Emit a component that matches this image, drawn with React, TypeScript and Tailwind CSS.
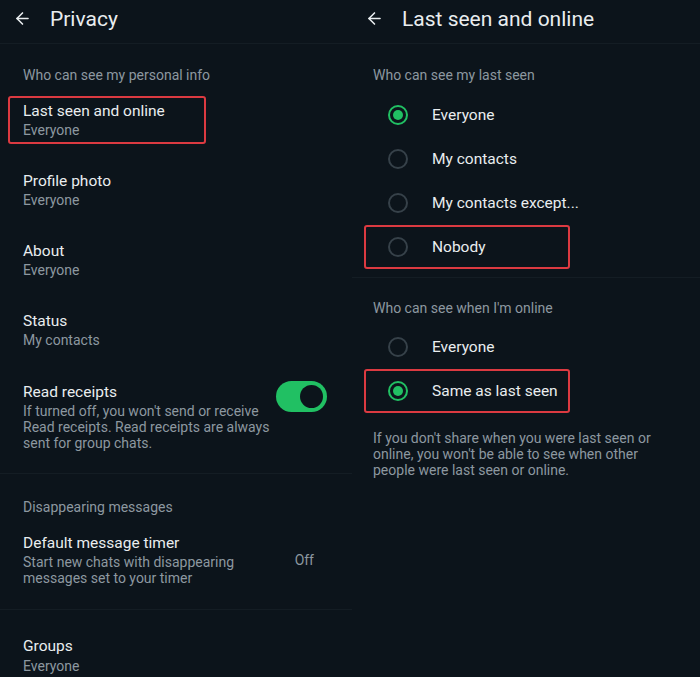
import { ArrowLeft } from 'lucide-react'
import type { ReactNode } from 'react'

const FONT = { fontFamily: 'Roboto, "Noto Sans", sans-serif' }

function Header({ title }: { title: string }) {
  return (
    <div className="h-[44px] flex items-center pb-[6px] pl-[13px] border-b border-[#141d24]">
      <ArrowLeft size={19} strokeWidth={2} className="text-[#e9edef] shrink-0" />
      <span className="ml-[18px] text-[21px] leading-[26px] text-[#e9edef] whitespace-nowrap">{title}</span>
    </div>
  )
}

// red outline drawn over the highlighted row
function Marked({ on, children, className = '' }: { on?: boolean; children: ReactNode; className?: string }) {
  return (
    <div className={`relative ${className}`}>
      {on && <span className="absolute inset-0 border-2 border-[#dc3a41] rounded-[3px] pointer-events-none" />}
      {children}
    </div>
  )
}

function Item({ title, sub, marked }: { title: string; sub: string; marked?: boolean }) {
  return (
    <Marked on={marked} className="mx-[8px] w-[198px] h-[48px] mb-[22px]">
      <div className="pl-[15px] pt-[5px]">
        <div className="text-[15.5px] leading-[20px] text-[#e9edef] whitespace-nowrap">{title}</div>
        <div className="text-[14px] leading-[18px] text-[#8d98a0]">{sub}</div>
      </div>
    </Marked>
  )
}

function Radio({ label, checked, marked }: { label: string; checked?: boolean; marked?: boolean }) {
  return (
    <Marked on={marked} className="ml-[12px] w-[206px] h-[44px]">
      <div className="h-full flex items-center pl-[24px]">
        {checked ? (
          <span className="shrink-0 w-[20px] h-[20px] rounded-full border-2 border-[#21c063] flex items-center justify-center">
            <span className="w-[10px] h-[10px] rounded-full bg-[#21c063]" />
          </span>
        ) : (
          <span className="shrink-0 w-[20px] h-[20px] rounded-full border-2 border-[#364149]" />
        )}
        <span className="ml-[24px] text-[15.5px] leading-[20px] text-[#e9edef] whitespace-nowrap">{label}</span>
      </div>
    </Marked>
  )
}

export default function App() {
  return (
    <div className="flex w-[700px] h-[677px] overflow-hidden bg-[#0c141b]" style={FONT}>
      {/* Privacy */}
      <div className="w-[352px] shrink-0 flex flex-col">
        <Header title="Privacy" />
        <div className="mt-[23px] pl-[23px] text-[14px] leading-[16px] text-[#8d98a0] whitespace-nowrap">
          Who can see my personal info
        </div>
        <div className="mt-[13px]">
          <Item title="Last seen and online" sub="Everyone" marked />
          <Item title="Profile photo" sub="Everyone" />
          <Item title="About" sub="Everyone" />
          <Item title="Status" sub="My contacts" />
        </div>
        <div className="flex items-start pl-[23px] pr-[25px] pt-[6px]">
          <div className="flex-1">
            <div className="text-[15.5px] leading-[20px] text-[#e9edef]">Read receipts</div>
            <div className="text-[14px] leading-[16px] text-[#8d98a0] mt-[1px] whitespace-nowrap">
              If turned off, you won't send or receive
              <br />
              Read receipts. Read receipts are always
              <br />
              sent for group chats.
            </div>
          </div>
          <div className="shrink-0 w-[51px] h-[31px] rounded-full bg-[#21c063] flex items-center justify-end pr-[4px] -mt-[1px]">
            <span className="w-[23px] h-[23px] rounded-full bg-[#0c141b]" />
          </div>
        </div>
        <div className="mt-[22px] border-t border-[#141d24]" />
        <div className="mt-[25px] pl-[23px] text-[14px] leading-[16px] text-[#8d98a0]">Disappearing messages</div>
        <div className="mt-[18px] flex items-center pl-[23px] pr-[38px]">
          <div className="flex-1">
            <div className="text-[15.5px] leading-[20px] text-[#e9edef]">Default message timer</div>
            <div className="text-[14px] leading-[16px] text-[#8d98a0] mt-[1px] whitespace-nowrap">
              Start new chats with disappearing
              <br />
              messages set to your timer
            </div>
          </div>
          <span className="text-[14px] text-[#8d98a0] mt-[2px]">Off</span>
        </div>
        <div className="mt-[23px] border-t border-[#141d24]" />
        <div className="mt-[26px] pl-[23px]">
          <div className="text-[15.5px] leading-[20px] text-[#e9edef]">Groups</div>
          <div className="text-[14px] leading-[18px] text-[#8d98a0] mt-[1px]">Everyone</div>
        </div>
      </div>

      {/* Last seen and online */}
      <div className="flex-1 flex flex-col">
        <Header title="Last seen and online" />
        <div className="mt-[23px] pl-[21px] text-[14px] leading-[16px] text-[#8d98a0]">Who can see my last seen</div>
        <div className="mt-[10px]">
          <Radio label="Everyone" checked />
          <Radio label="My contacts" />
          <Radio label="My contacts except..." />
          <Radio label="Nobody" marked />
        </div>
        <div className="mt-[8px] border-t border-[#141d24]" />
        <div className="mt-[22px] pl-[21px] text-[14px] leading-[16px] text-[#8d98a0]">Who can see when I'm online</div>
        <div className="mt-[9px]">
          <Radio label="Everyone" />
          <Radio label="Same as last seen" checked marked />
        </div>
        <div className="mt-[17px] pl-[21px] text-[14px] leading-[16px] text-[#8d98a0] whitespace-nowrap">
          If you don't share when you were last seen or
          <br />
          online, you won't be able to see when other
          <br />
          people were last seen or online.
        </div>
      </div>
    </div>
  )
}
